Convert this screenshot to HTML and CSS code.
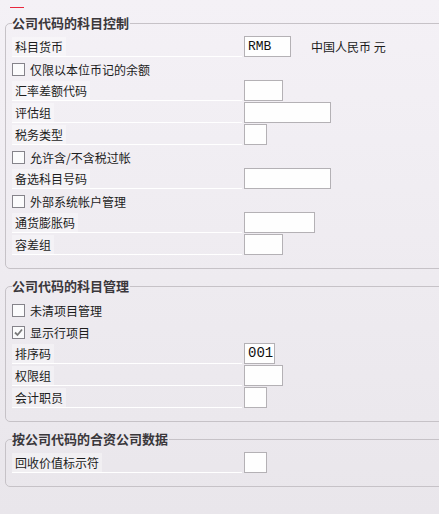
FILE: index.html
```html
<!DOCTYPE html>
<html lang="zh">
<head>
<meta charset="utf-8">
<link rel="stylesheet" href="styles.css">
</head>
<body>
<div class="page">
  <div class="mark"></div>

  <fieldset class="group">
    <legend class="title">公司代码的科目控制</legend>
    <div class="row">
      <div class="label"><span>科目货币</span></div>
      <div class="field w46 mono">RMB</div>
      <span class="extra">中国人民币 元</span>
    </div>
    <div class="row check"><span class="box"></span><span>仅限以本位币记的余额</span></div>
    <div class="row"><div class="label"><span>汇率差额代码</span></div><div class="field w39"></div></div>
    <div class="row"><div class="label"><span>评估组</span></div><div class="field w86"></div></div>
    <div class="row"><div class="label"><span>税务类型</span></div><div class="field w23"></div></div>
    <div class="row check"><span class="box"></span><span>允许含/不含税过帐</span></div>
    <div class="row"><div class="label"><span>备选科目号码</span></div><div class="field w86"></div></div>
    <div class="row check"><span class="box"></span><span>外部系统帐户管理</span></div>
    <div class="row"><div class="label"><span>通货膨胀码</span></div><div class="field w71"></div></div>
    <div class="row"><div class="label"><span>容差组</span></div><div class="field w39"></div></div>
  </fieldset>

  <fieldset class="group">
    <legend class="title">公司代码的科目管理</legend>
    <div class="row check"><span class="box"></span><span>未清项目管理</span></div>
    <div class="row check"><span class="box"><svg width="11" height="11" viewBox="0 0 11 11"><path d="M2 5.5 L4.5 8 L9 2.5" fill="none" stroke="#7a7a7a" stroke-width="1.8"/></svg></span><span>显示行项目</span></div>
    <div class="row"><div class="label"><span>排序码</span></div><div class="field w31 mono big">001</div></div>
    <div class="row"><div class="label"><span>权限组</span></div><div class="field w39"></div></div>
    <div class="row"><div class="label"><span>会计职员</span></div><div class="field w23"></div></div>
  </fieldset>

  <fieldset class="group">
    <legend class="title">按公司代码的合资公司数据</legend>
    <div class="row"><div class="label"><span>回收价值标示符</span></div><div class="field w23"></div></div>
  </fieldset>
</div>
</body>
</html>
```
FILE: styles.css
```css
html, body {
  margin: 0;
  padding: 0;
  height: 100%;
  overflow: hidden;
}
body {
  background: linear-gradient(#f4f1f6, #e9e6eb);
  font-family: "Noto Sans CJK SC", "Noto Sans", sans-serif;
  font-size: 12px;
  color: #1c1c1c;
}
.page {
  padding-top: 7px;
}
.mark {
  width: 14px;
  height: 1px;
  margin-left: 10px;
  background: #e8283e;
}
.group {
  margin: 7px -20px 0 5px;
  padding: 5px 0 12px 6px;
  border: 1px solid #c6c2c7;
  border-radius: 5px;
  min-width: 0;
}
.group + .group {
  margin-top: 9px;
}
.title {
  padding: 0 1px 0 0;
  margin-left: 0;
  font-size: 13px;
  line-height: 16px;
  font-weight: bold;
  color: #3a373b;
}
.row {
  display: flex;
  align-items: flex-start;
  height: 22px;
}
.label {
  width: 230px;
  height: 20px;
  border-bottom: 1px solid #ffffff;
  margin-right: 2px;
  display: flex;
}
.label span {
  display: block;
  height: 19px;
  margin-top: 1px;
  padding: 0 3px;
  line-height: 19px;
  background: rgba(255, 255, 255, 0.35);
}
.field {
  box-sizing: border-box;
  height: 21px;
  border: 1px solid #b4b1b5;
  background: #fefefe;
  line-height: 19px;
  padding-left: 3px;
}
.mono {
  font-family: "Liberation Mono", "DejaVu Sans Mono", monospace;
  font-size: 13px;
  color: #111;
}
.big {
  font-size: 14px;
}
.w23 { width: 23px; }
.w31 { width: 31px; }
.w39 { width: 39px; }
.w46 { width: 47px; }
.w71 { width: 71px; }
.w86 { width: 87px; }
.extra {
  margin-left: 20px;
  line-height: 21px;
}
.check {
  align-items: center;
}
.box {
  box-sizing: border-box;
  width: 13px;
  height: 13px;
  border: 1px solid #85838a;
  background: #fbfbfc;
  margin-right: 5px;
  display: flex;
  align-items: center;
  justify-content: center;
}
```
